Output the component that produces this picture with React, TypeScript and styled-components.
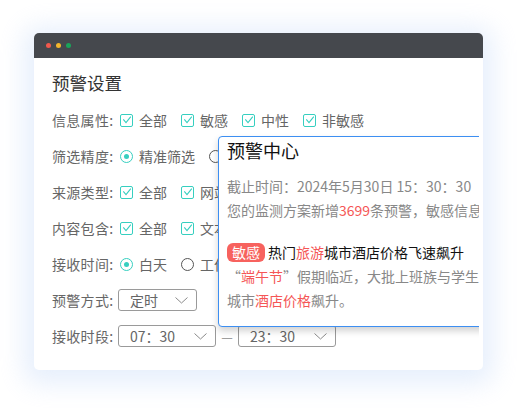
import React from "react";
import styled, { createGlobalStyle } from "styled-components";

const Global = createGlobalStyle`
  html, body { margin: 0; padding: 0; background: #ffffff; }
  body { font-family: "Noto Sans CJK SC", "Noto Sans", sans-serif; }
  * { box-sizing: border-box; }
`;

const Page = styled.div`
  width: 528px;
  height: 416px;
  padding: 33px 0 0 34px;
  background: #ffffff;
`;

const Card = styled.div`
  position: relative;
  width: 449px;
  height: 337px;
  background: #ffffff;
  border-radius: 5px;
  box-shadow: 0 4px 26px 10px rgba(214, 228, 250, 0.6);
  overflow: hidden;
`;

const TitleBar = styled.div`
  height: 25px;
  background: #45484d;
  display: flex;
  align-items: center;
  gap: 5px;
  padding-left: 12px;
`;

const Dot = styled.span<{ $c: string }>`
  width: 5px;
  height: 5px;
  border-radius: 50%;
  background: ${(p) => p.$c};
`;

const Body = styled.div`
  padding: 12px 0 0 18px;
  display: flex;
  flex-direction: column;
`;

const Heading = styled.div`
  font-size: 17.5px;
  line-height: 26px;
  color: #333;
  margin-bottom: 6px;
`;

const Row = styled.div`
  height: 36px;
  display: flex;
  align-items: center;
`;

const Label = styled.span`
  width: 66px;
  font-size: 14px;
  letter-spacing: 0.3px;
  color: #666;
  white-space: nowrap;
`;

const Option = styled.span`
  display: inline-flex;
  align-items: center;
  margin-left: 2px;
  margin-right: 12px;
  font-size: 14px;
  color: #666;
  white-space: nowrap;
`;

const Box = styled.span`
  width: 13px;
  height: 13px;
  border: 1px solid #36cfc0;
  border-radius: 2px;
  margin-right: 6px;
  display: inline-flex;
  align-items: center;
  justify-content: center;
`;

const Radio = styled.span<{ $on?: boolean }>`
  width: 13px;
  height: 13px;
  border-radius: 50%;
  border: 1px solid ${(p) => (p.$on ? "#36cfc0" : "#555")};
  margin-right: 6px;
  display: inline-flex;
  align-items: center;
  justify-content: center;
  &::after {
    content: "";
    width: 5px;
    height: 5px;
    border-radius: 50%;
    background: ${(p) => (p.$on ? "#36cfc0" : "transparent")};
  }
`;

const Select = styled.span<{ $w: number }>`
  width: ${(p) => p.$w}px;
  height: 22px;
  border: 1px solid #9a9a9a;
  border-radius: 3px;
  display: inline-flex;
  align-items: center;
  justify-content: space-between;
  padding: 0 8px 0 11px;
  font-size: 14px;
  color: #666;
`;

const Dash = styled.span`
  width: 22px;
  text-align: center;
  font-size: 13px;
  color: #888;
`;

const PopupClip = styled.div`
  position: absolute;
  left: 176px;
  top: 100px;
  right: 4px;
  height: 240px;
  overflow: hidden;
`;

const Popup = styled.div`
  margin: 3px 0 0 8px;
  width: 330px;
  height: 191px;
  background: #fff;
  border: 1px solid #3d8ff2;
  border-radius: 4px;
  box-shadow: 0 4px 7px rgba(0, 0, 0, 0.18);
  padding: 0 0 0 8px;
`;

const PopTitle = styled.div`
  font-size: 18px;
  line-height: 26px;
  color: #111;
  font-weight: 400;
  margin-bottom: 11px;
`;

const Line = styled.div<{ $dark?: boolean; $gap?: number }>`
  font-size: 14px;
  line-height: 24px;
  color: ${(p) => (p.$dark ? "#111" : "#888")};
  white-space: nowrap;
  margin-top: ${(p) => p.$gap || 0}px;
  display: flex;
  align-items: center;
`;

const Red = styled.span`
  color: #f55656;
`;

const Tag = styled.span`
  display: inline-flex;
  align-items: center;
  height: 19px;
  padding: 0 5px;
  margin-right: 3px;
  border-radius: 6px;
  background: #f7625e;
  color: #fff;
  font-size: 14px;
`;

const Check = () => (
  <svg width="10" height="10" viewBox="0 0 10 10">
    <path d="M1.3 4.4 L4 7.6 L8.8 1.6" fill="none" stroke="#36cfc0" strokeWidth="1.1" />
  </svg>
);

const Chevron = () => (
  <svg width="13" height="7" viewBox="0 0 13 7">
    <path d="M0.5 0.5 L6.5 6 L12.5 0.5" fill="none" stroke="#8a8a8a" strokeWidth="1" />
  </svg>
);

const CB = ({ t }: { t: string }) => (
  <Option>
    <Box>
      <Check />
    </Box>
    {t}
  </Option>
);

const RB = ({ t, on }: { t: string; on?: boolean }) => (
  <Option>
    <Radio $on={on} />
    {t}
  </Option>
);

export default function App() {
  return (
    <>
      <Global />
      <Page>
        <Card>
          <TitleBar>
            <Dot $c="#f0584c" />
            <Dot $c="#f3b52c" />
            <Dot $c="#1aa35a" />
          </TitleBar>
          <Body>
            <Heading>预警设置</Heading>
            <Row>
              <Label>信息属性:</Label>
              <CB t="全部" />
              <CB t="敏感" />
              <CB t="中性" />
              <CB t="非敏感" />
            </Row>
            <Row>
              <Label>筛选精度:</Label>
              <RB t="精准筛选" on />
              <RB t="模糊筛选" />
            </Row>
            <Row>
              <Label>来源类型:</Label>
              <CB t="全部" />
              <CB t="网站" />
            </Row>
            <Row>
              <Label>内容包含:</Label>
              <CB t="全部" />
              <CB t="文本" />
            </Row>
            <Row>
              <Label>接收时间:</Label>
              <RB t="白天" on />
              <RB t="工作日" />
            </Row>
            <Row>
              <Label>预警方式:</Label>
              <Select $w={79}>
                定时
                <Chevron />
              </Select>
            </Row>
            <Row>
              <Label>接收时段:</Label>
              <Select $w={98}>
                07：30
                <Chevron />
              </Select>
              <Dash>—</Dash>
              <Select $w={98}>
                23：30
                <Chevron />
              </Select>
            </Row>
          </Body>
          <PopupClip>
            <Popup>
              <PopTitle>预警中心</PopTitle>
              <Line>截止时间：2024年5月30日 15：30：30</Line>
              <Line>
                您的监测方案新增<Red>3699</Red>条预警，敏感信息
              </Line>
              <Line $dark $gap={18}>
                <Tag>敏感</Tag>热门<Red>旅游</Red>城市酒店价格飞速飙升
              </Line>
              <Line>
                “<Red>端午节</Red>”假期临近，大批上班族与学生
              </Line>
              <Line>
                城市<Red>酒店价格</Red>飙升。
              </Line>
            </Popup>
          </PopupClip>
        </Card>
      </Page>
    </>
  );
}
